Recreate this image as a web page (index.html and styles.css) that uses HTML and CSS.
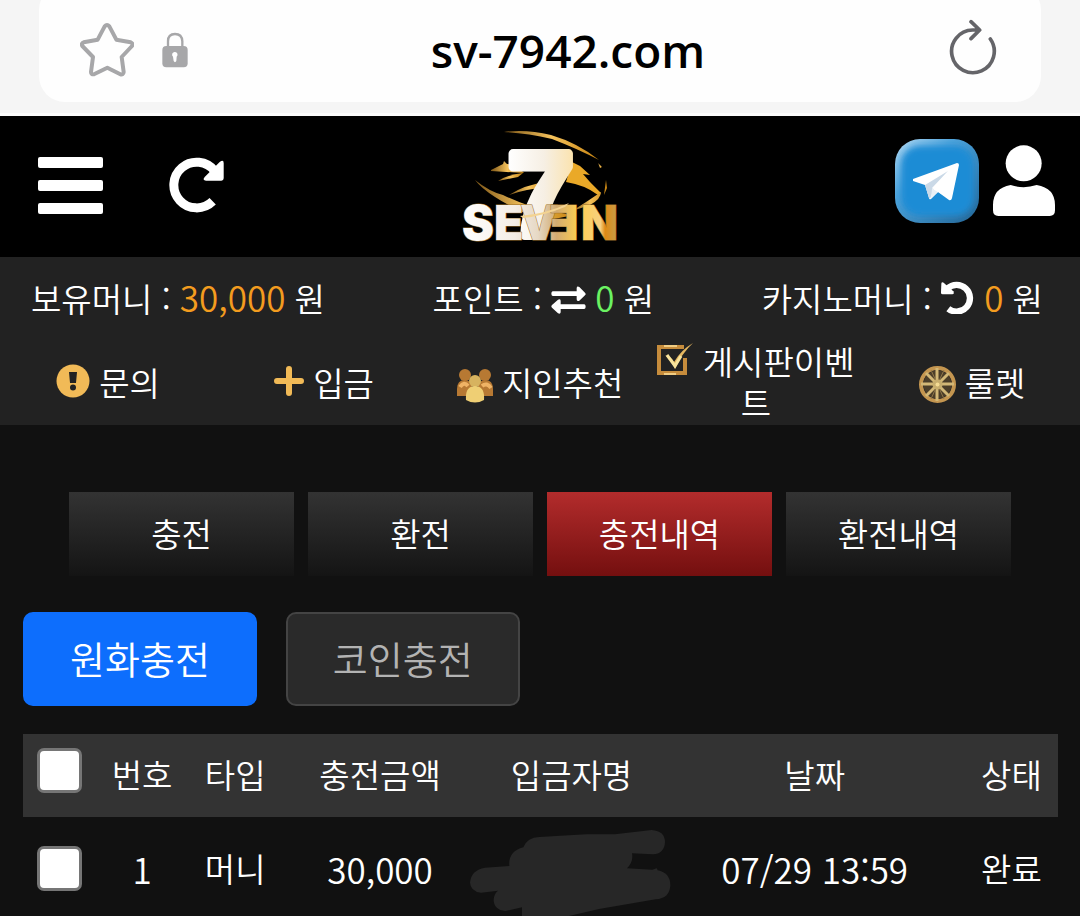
FILE: index.html
```html
<!DOCTYPE html>
<html lang="ko">
<head>
<meta charset="utf-8">
<meta name="viewport" content="width=device-width, initial-scale=1">
<title>충전내역</title>
<link rel="stylesheet" href="styles.css">
</head>
<body>
<div class="browser">
  <div class="address">
    <div class="address-left">
      <button class="icon-btn" aria-label="북마크"><svg width="54" height="54" viewBox="239 66 162 162"><path d="M313 76q7-8 14 0l21 40 43 8q9 4 4 11l-31 33 6 45q-1 9-10 7l-39-20-40 20q-9 1-9-7l6-45-32-33q-4-8 4-11l42-8z" fill="none" stroke="#a7a7a9" stroke-width="12" stroke-linejoin="round"/></svg></button>
      <svg width="26" height="36" viewBox="486 93 78 108" role="img" aria-label="보안 연결"><path d="M504 138v-17q0-22 21-22t22 22v17" fill="none" stroke="#a7a7a9" stroke-width="7"/><rect x="487" y="135" width="76" height="64" rx="12" fill="#a7a7a9"/><path d="M525 153a8 8 0 0 1 5 14l-1 13q-4 7-8 0l-2-13a8 8 0 0 1 6-14z" fill="#fff"/></svg>
    </div>
    <span class="url">sv-7942.com</span>
    <button class="icon-btn address-reload" aria-label="새로고침"><svg width="50" height="58" viewBox="325 54 150 174"><path d="M452 114A64 64 0 1 1 399 87H416M394 62l26 25-26 26" fill="none" stroke="#656569" stroke-width="11" stroke-linecap="round" stroke-linejoin="round"/></svg></button>
  </div>
</div>

<header class="header">
  <div class="header-left">
    <button class="icon-btn" aria-label="메뉴"><svg width="65" height="57" viewBox="0 0 65 57" fill="#fff"><rect width="65" height="11" rx="2"/><rect y="23" width="65" height="11" rx="2"/><rect y="46" width="65" height="11" rx="2"/></svg></button>
    <button class="icon-btn" aria-label="다시 불러오기"><svg width="56" height="56" viewBox="508 474 168 168"><path d="M639 607A68.500 68.500 0 1 1 645 516" fill="none" stroke="#fff" stroke-width="27"/><path d="M660 489q12-9 12 3v46q0 7-7 7h-46q-12-1-4-11z" fill="#fff"/></svg></button>
  </div>
  <a class="logo" href="#" aria-label="SEVEN">
    <svg width="160" height="114" viewBox="0 0 160 114">
      <defs>
        <linearGradient id="seven" x1="0" y1="0" x2="1" y2="0"><stop offset="0" stop-color="#fff"/><stop offset=".55" stop-color="#f6efe4"/><stop offset="1" stop-color="#fbe3ae"/></linearGradient>
        <linearGradient id="word" gradientUnits="userSpaceOnUse" x1="0" y1="0" x2="156" y2="0"><stop offset="0" stop-color="#fff"/><stop offset=".35" stop-color="#f4ede6"/><stop offset=".5" stop-color="#e6d8c4"/><stop offset=".62" stop-color="#d2ab70"/><stop offset=".76" stop-color="#ffcf50"/><stop offset=".9" stop-color="#f7cf80"/><stop offset=".93" stop-color="#df8a14"/><stop offset="1" stop-color="#c99a45"/></linearGradient>
        <linearGradient id="gold" x1="0" y1="0" x2="1" y2="0"><stop offset="0" stop-color="#7c5516"/><stop offset=".5" stop-color="#f5c25c"/><stop offset="1" stop-color="#c5820f"/></linearGradient>
      </defs>
      <g fill="url(#gold)">
        <path d="M44 2Q66-1 91 5 118 13 139 30 118 19 92 9 66 3 44 2z"/>
        <path d="M31 40l12-6 1-3 3 3 9 1 8 8-33-2z"/>
        <path d="M38 51q9-6 25-8l-5 4z"/>
        <path d="M49 65q15-10 40-14v6q-24 2-40 8z"/>
        <path d="M15 50q15 12 28 15 25 12 46 16l25 4-30 6Q55 80 35 67 21 58 15 50z"/>
        <path d="M112 32l8 4 10 9-7-1 7 8 11 11-3 2q-13-10-32-13z" fill="#eaa928"/>
        <path d="M141 62q-13 9-29 19l18-6q11-6 11-13zM146 50l1 8-3 7z"/>
        <path d="M138 33l4 4-2 1z"/>
      </g>
      <text class="logo-seven" x="48" y="105" fill="url(#seven)" stroke="url(#seven)">7</text>
      <text class="logo-word" fill="url(#word)" y="110" x="2 34 60 89 121">SEVƎN</text>
      <path d="M60 86q26-2 49-13l-4 4q-22 9-42 11z" fill="#f3d391"/>
    </svg>
  </a>
  <div class="header-right">
    <a href="#" aria-label="텔레그램"><svg width="84" height="84" viewBox="0 0 84 84">
      <defs><filter id="soft" x="-20%" y="-20%" width="140%" height="140%"><feGaussianBlur stdDeviation="3"/></filter><linearGradient id="edge" x1="0" y1="0" x2="1" y2="1"><stop offset="0" stop-color="#b4d9f3"/><stop offset=".35" stop-color="#4fa3db"/><stop offset="1" stop-color="#236393"/></linearGradient><clipPath id="tile"><rect width="84" height="84" rx="25"/></clipPath></defs>
      <g clip-path="url(#tile)"><rect width="84" height="84" fill="url(#edge)"/><rect x="6" y="7" width="73" height="70" rx="19" fill="#1c8cd5" filter="url(#soft)"/></g>
      <path d="M18 40l44-16q2 0 2 2l-7 33q-1 3-3 2l-11-8-7 7q-2 1-2-1l-4-13-12-4z" fill="#fff"/><path d="M30 46l23-14-14 17-4 11-1-1z" fill="#cad9e7"/><path d="M54 31L37 50l-1 9 7-6-5-3z" fill="#e9f0f6"/><path d="M54 31L37 49l19 12 7-35z" fill="#fff"/>
    </svg></a>
    <a href="#" aria-label="내 정보"><svg width="62" height="72" viewBox="459 432 186 216" fill="#fff"><circle cx="551" cy="487" r="54"/><path d="M512 552q39 13 78 0 55 9 55 60v16q0 17-16 17H475q-16 0-16-17v-16q0-51 53-60z"/></svg></a>
  </div>
</header>

<section class="info">
  <div class="balances">
    <div>보유머니 : <span class="num money">30,000</span> 원</div>
    <div>포인트 : <svg class="glyph" width="35" height="28" viewBox="441 67 105 84" fill="#fff"><path d="M446 83h72V73q1-7 8-3l17 17q4 4 0 8l-17 16q-8 4-8-4V97h-72q-4-1-4-7t4-7zM541 122h-71v-11q-1-7-8-3l-18 16q-4 4 0 8l18 17q7 4 8-3v-10h71q4-1 4-7t-4-7z"/></svg> <span class="num point">0</span> 원</div>
    <div>카지노머니 : <svg class="glyph" width="34" height="34" viewBox="657 58 102 102"><path d="M679 144A40 40 0 1 0 676 84" fill="none" stroke="#fff" stroke-width="19"/><path d="M658 69q1-7 7-3l29 26q4 9-3 9h-29q-5 0-5-5z" fill="#fff"/></svg> <span class="num money">0</span> 원</div>
  </div>
  <nav class="menu">
    <a href="#"><svg class="glyph" width="34" height="34" viewBox="0 0 34 34"><circle cx="17" cy="17" r="16.500" fill="#f1ba57"/><path d="M13 8h8l-1 11h-6z" fill="#222"/><circle cx="17" cy="23.500" r="3" fill="#222"/></svg> 문의</a>
    <a href="#"><svg class="glyph raised" width="30" height="30" viewBox="0 0 30 30"><path d="M15 3v24M3 15h24" stroke="#f1ba57" stroke-width="6" stroke-linecap="round"/></svg> 입금</a>
    <a href="#"><svg class="glyph low" width="36" height="34" viewBox="0 0 36 34"><g fill="#b77933"><circle cx="8" cy="6" r="6"/><circle cx="28" cy="6" r="6"/><path d="M0 20q0-9 8-9 6 0 7 7l-5 9H0zM36 20q0-9-8-9-6 0-7 7l5 9h10z"/></g><path d="M3 18q4-6 8-1M25 17q5-4 9 2" stroke="#efb365" stroke-width="4" fill="none"/><circle cx="18" cy="12" r="6" fill="#d7b35f"/><path d="M9 31q-1-14 9-14t9 14q-9 5-18 0z" fill="#efcf74"/></svg> 지인추천</a>
    <a href="#"><svg class="glyph" width="36" height="34" viewBox="0 0 36 34"><path d="M27 4H2v26h26V15" fill="none" stroke="#c68c3c" stroke-width="4"/><path d="M7 3h13M7 31h12" stroke="#f1cd83" stroke-width="2"/><path d="M8 12q7 2 9 7Q24 7 36 0 25 10 18 26 14 16 8 12z" fill="#e4b760"/><path d="M10 12l8 11 6-10" fill="none" stroke="#f8e39c" stroke-width="3"/></svg> 게시판이벤트</a>
    <a href="#"><svg class="glyph low" width="37" height="37" viewBox="0 0 37 37" fill="none"><circle cx="18.500" cy="18.500" r="16.500" stroke="#c49650" stroke-width="4"/><circle cx="18.500" cy="18.500" r="14" fill="#4c3e29"/><path d="M18 2v33M2 18h33M7 7l23 23M30 7L7 30" stroke="#d3b877" stroke-width="3"/><path d="M12 4l13 29M25 4L12 33" stroke="#8f7648" stroke-width="1"/><circle cx="18.500" cy="18.500" r="5" fill="#c7ad6d"/><circle cx="18.500" cy="18.500" r="2" fill="#f4db93"/></svg> 룰렛</a>
  </nav>
</section>

<main class="content">
  <nav class="tabs">
    <a href="#">충전</a>
    <a href="#">환전</a>
    <a href="#" class="active" aria-current="page">충전내역</a>
    <a href="#">환전내역</a>
  </nav>
  <div class="types">
    <button class="type selected">원화충전</button>
    <button class="type">코인충전</button>
  </div>
  <table class="history">
    <colgroup><col class="c-check"><col class="c-short"><col class="c-short"><col class="c-amount"><col class="c-name"><col class="c-date"><col></colgroup>
    <thead>
      <tr><th><input type="checkbox" aria-label="전체 선택"></th><th>번호</th><th>타입</th><th>충전금액</th><th>입금자명</th><th>날짜</th><th>상태</th></tr>
    </thead>
    <tbody>
      <tr><td><input type="checkbox" aria-label="1번 선택"></td><td class="num">1</td><td>머니</td><td class="num">30,000</td><td class="masked"><svg width="201" height="86" viewBox="93 330 603 258" role="img" aria-label="가려진 이름"><path d="M253 382q12-30 48-31l142-8 85 0 110-13q40 3 40 37-2 35-37 36l-62-3q5 25-15 45l76 4 13-4 3 6q38 8 38 45-2 40-44 42L480 567 390 588H249v-26l-50 11q-35-4-35-34 2-20 13-27l-51 6q-32-3-33-31 4-37 45-44l73-5q-4-44 42-56z" fill="#272727"/></svg></td><td class="num">07/29 13:59</td><td>완료</td></tr>
    </tbody>
  </table>
</main>
</body>
</html>
```
FILE: styles.css
```css
* {
  box-sizing: border-box;
}

body {
  margin: 0;
  background: #111;
  color: #fff;
  font-family: "Noto Sans CJK KR", sans-serif;
  font-size: 33px;
  font-weight: 350;
  line-height: 41px;
}

a {
  color: inherit;
  text-decoration: none;
}

svg {
  display: block;
}

.icon-btn {
  padding: 0;
  border: 0;
  background: none;
}

/* Browser address bar */
.browser {
  overflow: hidden;
  padding: 0 39px 11px;
  border-bottom: 3px solid #fcfcfc;
  background: #f5f5f5;
}

.address {
  display: grid;
  grid-template-columns: 1fr auto 1fr;
  align-items: center;
  height: 118px;
  margin-top: -16px;
  padding: 13px 43px 0 41px;
  border-radius: 26px;
  background: #fefefe;
}

.address-left {
  display: flex;
  align-items: center;
  gap: 28px;
}

.url {
  padding-left: 58px;
  color: #000;
  font-family: "Open Sans", sans-serif;
  font-size: 46px;
  font-weight: 600;
  line-height: 56px;
}

.address-reload {
  justify-self: end;
  padding-bottom: 4px;
}

/* Site header */
.header {
  display: grid;
  grid-template-columns: 1fr auto 1fr;
  align-items: center;
  height: 141px;
  padding: 0 25px;
  background: #000;
}

.header-left {
  display: flex;
  align-items: center;
  gap: 66px;
  padding: 0 0 3px 13px;
}

.header-right {
  display: flex;
  align-items: center;
  justify-content: flex-end;
  gap: 14px;
  padding-bottom: 12px;
}

.logo svg {
  overflow: visible;
}

.logo-seven {
  font: bold 118px "Liberation Sans", sans-serif;
  stroke-width: 9px;
  stroke-linejoin: round;
}

.logo-word {
  font: 900 48px Inter, sans-serif;
  stroke: #9a6f2c;
  stroke-width: 1px;
  paint-order: stroke;
}

/* Balances and shortcuts */
.info {
  padding-top: 19px;
  background: #222;
}

.balances {
  display: flex;
  justify-content: space-between;
  height: 41px;
  padding: 0 37px 0 31px;
}

.num {
  font-size: 35px;
}

.money {
  color: #f39c1f;
}

.point {
  color: #6bf262;
}

.glyph {
  display: inline-block;
  vertical-align: -2px;
}

.raised {
  vertical-align: 0;
}

.low {
  vertical-align: -7px;
}

.menu {
  display: grid;
  grid-template-columns: repeat(5, 1fr);
  align-items: center;
  padding: 24px 0 2px;
  text-align: center;
}

/* Page content */
.content {
  padding: 67px 22px 0 23px;
}

.tabs {
  display: grid;
  grid-template-columns: repeat(4, 1fr);
  gap: 14px;
  padding: 0 47px 0 46px;
}

.tabs a {
  padding: 21px 0 22px;
  background: linear-gradient(#333, #141414);
  text-align: center;
}

.tabs .active {
  background: linear-gradient(#b32c2c, #740f0f);
}

.types {
  display: flex;
  gap: 29px;
  margin: 36px 0 28px;
}

.type {
  padding: 19px 45px 21px;
  border: 2px solid #444;
  border-radius: 10px;
  background: #2a2a2a;
  color: #b3b3b3;
  font: 350 38px/50px "Noto Sans CJK KR", sans-serif;
}

.type.selected {
  border-color: #0d6efd;
  background: #0d6efd;
  color: #fff;
}

.history {
  width: 100%;
  border-collapse: collapse;
  table-layout: fixed;
  text-align: center;
}

.c-check {
  width: 7%;
}

.c-short {
  width: 9%;
}

.c-amount {
  width: 19%;
}

.c-name {
  width: 18%;
}

.c-date {
  width: 29%;
}

.history th {
  height: 83px;
  padding: 0 0 2px;
  background: #333;
  font-weight: 350;
}

.history td {
  height: 99px;
  padding: 4px 0 0;
  white-space: nowrap;
}

.history .masked {
  padding: 13px 0 0;
}

.masked svg {
  margin: 0 -8px;
}

.history input {
  display: block;
  width: 45px;
  height: 45px;
  margin: 0 auto;
  border: 3px solid #767676;
  border-radius: 7px;
  background: #fff;
  appearance: none;
}

.history th input {
  margin-bottom: 8px;
}

.history input:checked {
  background: #0d6efd;
}
```
